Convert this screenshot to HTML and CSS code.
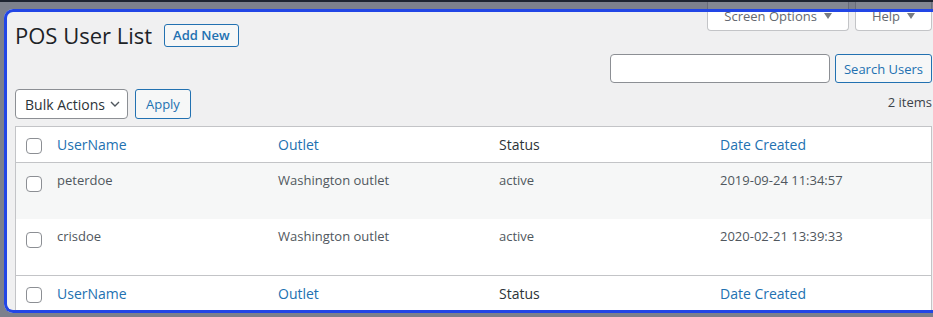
FILE: index.html
```html
<!DOCTYPE html>
<html lang="en">
<head>
<meta charset="UTF-8">
<meta name="viewport" content="width=device-width, initial-scale=1.0">
<title>POS User List</title>
<link rel="stylesheet" href="styles.css">
</head>
<body>
    <div class="adminbar"></div>

    <div class="screen-meta-links">
        <button class="meta-tab">Screen Options
            <svg width="8" height="6" viewBox="0 0 8 6"><path d="M0 0h8L4 6z" fill="#787c82"/></svg>
        </button>
        <button class="meta-tab">Help
            <svg width="8" height="6" viewBox="0 0 8 6"><path d="M0 0h8L4 6z" fill="#787c82"/></svg>
        </button>
    </div>

    <div class="wrap">
        <div class="title-row">
            <h1>POS User List</h1>
            <a href="#" class="page-title-action">Add New</a>
        </div>

        <div class="search-box">
            <input type="search" class="search-input">
            <button class="button">Search Users</button>
        </div>

        <div class="tablenav">
            <div class="bulk-select">
                <span>Bulk Actions</span>
                <svg width="10" height="6" viewBox="0 0 10 6"><path d="M1 1l4 4 4-4" fill="none" stroke="#50575e" stroke-width="1.4"/></svg>
            </div>
            <button class="button">Apply</button>
            <span class="displaying-num">2 items</span>
        </div>

        <table class="list-table">
            <colgroup>
                <col class="col-cb">
                <col><col><col><col>
            </colgroup>
            <thead>
                <tr>
                    <th class="check-column"><input type="checkbox"></th>
                    <th><a href="#">UserName</a></th>
                    <th><a href="#">Outlet</a></th>
                    <th>Status</th>
                    <th><a href="#">Date Created</a></th>
                </tr>
            </thead>
            <tbody>
                <tr class="alternate">
                    <th class="check-column"><input type="checkbox"></th>
                    <td>peterdoe</td>
                    <td>Washington outlet</td>
                    <td>active</td>
                    <td>2019-09-24 11:34:57</td>
                </tr>
                <tr>
                    <th class="check-column"><input type="checkbox"></th>
                    <td>crisdoe</td>
                    <td>Washington outlet</td>
                    <td>active</td>
                    <td>2020-02-21 13:39:33</td>
                </tr>
            </tbody>
            <tfoot>
                <tr>
                    <th class="check-column"><input type="checkbox"></th>
                    <th><a href="#">UserName</a></th>
                    <th><a href="#">Outlet</a></th>
                    <th>Status</th>
                    <th><a href="#">Date Created</a></th>
                </tr>
            </tfoot>
        </table>
    </div>

    <div class="focus-frame"></div>
</body>
</html>
```

FILE: styles.css
```css
body {
    margin: 0;
    height: 317px;
    overflow: hidden;
    background: #f0f0f1;
    font-family: "Open Sans", Arial, sans-serif;
    font-size: 13px;
    color: #3c434a;
}
.adminbar {
    height: 2px;
    background: #1d2327;
}
.screen-meta-links {
    float: right;
    display: flex;
    gap: 6px;
    margin-right: 1px;
}
.meta-tab {
    display: flex;
    align-items: center;
    gap: 7px;
    height: 29px;
    padding: 0 16px;
    background: #fff;
    border: 1px solid #c3c4c7;
    border-top: none;
    border-radius: 0 0 4px 4px;
    font-family: inherit;
    font-size: 13px;
    color: #646970;
}
.wrap {
    margin: 0 1px 0 15px;
    padding-top: 19px;
}
.title-row {
    display: flex;
    align-items: center;
}
h1 {
    margin: 0;
    font-size: 22px;
    font-weight: 400;
    line-height: 29px;
    color: #1d2327;
}
.page-title-action {
    margin-left: 12px;
    height: 23px;
    padding: 0 8px;
    box-sizing: border-box;
    border: 1px solid #2271b1;
    border-radius: 3px;
    background: #f6f7f7;
    color: #2271b1;
    font-size: 13px;
    font-weight: 600;
    line-height: 21px;
    text-decoration: none;
}
.search-box {
    display: flex;
    justify-content: flex-end;
    gap: 5px;
    margin-top: 4px;
}
.search-input {
    width: 220px;
    height: 29px;
    box-sizing: border-box;
    border: 1px solid #8c8f94;
    border-radius: 4px;
    background: #fff;
}
.button {
    height: 29px;
    padding: 0 8px;
    box-sizing: border-box;
    border: 1px solid #2271b1;
    border-radius: 3px;
    background: #f6f7f7;
    color: #2271b1;
    font-family: inherit;
    font-size: 13px;
    white-space: nowrap;
}
.tablenav {
    display: flex;
    align-items: center;
    gap: 7px;
    height: 30px;
    margin: 6px 0 7px;
}
.tablenav .button {
    width: 56px;
    height: 30px;
    padding: 0;
}
.bulk-select {
    display: flex;
    align-items: center;
    gap: 5px;
    height: 30px;
    box-sizing: border-box;
    padding: 0 7px 0 9px;
    border: 1px solid #8c8f94;
    border-radius: 4px;
    background: #fff;
    font-size: 14px;
    color: #2c3338;
    white-space: nowrap;
}
.displaying-num {
    margin-left: auto;
    align-self: flex-start;
    margin-top: 3px;
    line-height: 20px;
    color: #3c434a;
}
.list-table {
    width: 100%;
    table-layout: fixed;
    border-collapse: separate;
    border-spacing: 0;
    background: #fff;
    border: 1px solid #c3c4c7;
}
.col-cb {
    width: 31px;
}
.list-table th,
.list-table td {
    text-align: left;
    font-weight: 400;
    vertical-align: top;
}
.list-table thead th,
.list-table tfoot th {
    padding: 7px 10px;
    font-size: 14px;
    line-height: 21px;
    color: #2c3338;
}
.list-table thead th {
    border-bottom: 1px solid #c3c4c7;
}
.list-table tfoot th {
    border-top: 1px solid #c3c4c7;
}
.list-table th a {
    color: #2271b1;
    text-decoration: none;
}
.list-table td {
    padding: 7px 10px 29px;
    line-height: 20px;
    color: #50575e;
}
.list-table tr.alternate {
    background: #f6f7f7;
}
.list-table .check-column {
    padding: 11px 0 0 10px;
    line-height: 0;
}
.list-table tbody .check-column {
    padding-top: 13px;
}
.check-column input {
    appearance: none;
    width: 16px;
    height: 16px;
    margin: 0;
    border: 1px solid #8c8f94;
    border-radius: 4px;
    background: #fff;
}
.focus-frame {
    position: absolute;
    top: 9px;
    left: 4px;
    right: 0;
    height: 304px;
    box-sizing: border-box;
    border: 3px solid #2246e6;
    border-right: none;
    border-radius: 9px 0 0 9px;
    box-shadow: 0 0 0 400px rgba(29, 36, 57, 0.55);
    pointer-events: none;
}
```
